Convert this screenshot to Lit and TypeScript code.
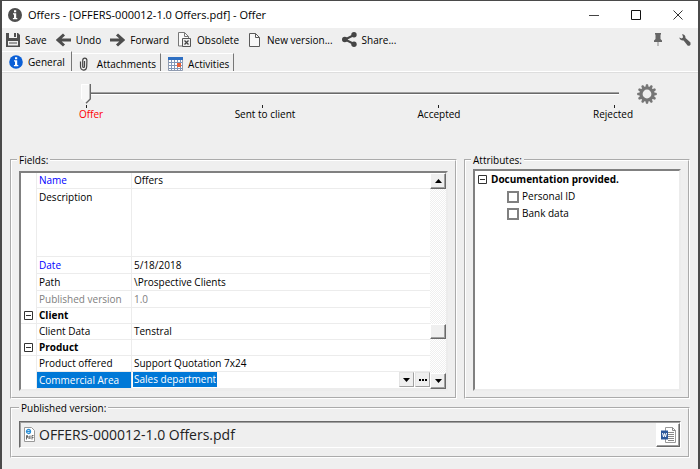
import { LitElement, html, css, svg, nothing } from "lit";
import { customElement, state } from "lit/decorators.js";

const saveIcon = svg`<svg viewBox="0 0 14 14" width="14" height="14"><path fill="#4d4d4d" fill-rule="evenodd" d="M0 0h3v5h8V0h1l2 2v12H0zM2 8v4.500h10V8z"/><path fill="#4d4d4d" d="M8 0h2v4H8zM3 9.500h8v1H3z"/></svg>`;
const undoIcon = svg`<svg viewBox="0 0 15 14" width="15" height="14"><path fill="none" stroke="#4d4d4d" stroke-width="3" d="M2 7h13M8 1.500L2 7l6 5.500"/></svg>`;
const forwardIcon = svg`<svg viewBox="0 0 15 14" width="15" height="14"><path fill="none" stroke="#4d4d4d" stroke-width="3" d="M0 7h13M7 1.500L13 7l-6 5.500"/></svg>`;
const obsoleteIcon = svg`<svg viewBox="0 0 14 15" width="14" height="15"><path fill="#f8f8f8" stroke="#777" d="M.5.5h6l4 4v9.500H.5z"/><path fill="none" stroke="#777" d="M6.500.5v4h4"/><path fill="#eee" stroke="#555" d="M4.500 6.500h8v8h-8z"/><path stroke="#444" stroke-width="1.300" d="M6.500 8.500l4 4m0-4l-4 4"/></svg>`;
const newIcon = svg`<svg viewBox="-1 0 14 14" width="14" height="14"><path fill="#f8f8f8" stroke="#5a5a5a" d="M.5.5h6l4 4v9H.5z"/><path fill="none" stroke="#5a5a5a" d="M6.500.5v4h4"/></svg>`;
const shareIcon = svg`<svg viewBox="0 0 15 15" width="15" height="15"><path fill="none" stroke="#454545" stroke-width="2" d="M12 3L3 7.500l9 4.500"/><circle cx="12" cy="2.800" r="2.700" fill="#454545"/><circle cx="2.800" cy="7.500" r="2.800" fill="#454545"/><circle cx="12" cy="12.200" r="2.700" fill="#454545"/></svg>`;
const pinIcon = svg`<svg viewBox="0 0 8 13" width="8" height="13"><path fill="#666" d="M1 0h6v1.500H6.500V6L8 7.500V9H0V7.500L1.500 6V1.500H1z"/><path fill="#888" d="M3.500 9h1v4h-1z"/></svg>`;
const wrenchIcon = svg`<svg viewBox="0 0 12 12" width="12" height="12"><path fill="#5a5a5a" d="M3 .3C5 .2 6.800 1.700 6.500 4L11.500 8.600v2.200l-1 .9H8.800L4.600 6.500C2.500 6.800.6 5.700.3 3.600L2.600 4.400 4 3.600 3.800 2z"/></svg>`;
const infoGrey = svg`<svg viewBox="0 0 14 14" width="14" height="14"><circle cx="7" cy="7" r="7" fill="#4d4d4d"/><path fill="#fff" d="M6 2.300h2.200v2H6zM5 5.300h3.200v4.700H9.300v1.300H4.900V10H6V6.600H5z"/></svg>`;
const infoBlue = svg`<svg viewBox="0 0 14 14" width="14" height="14"><circle cx="7" cy="7" r="6.800" fill="#0a5fd6"/><path fill="#fff" d="M6 2.300h2.200v2H6zM5 5.300h3.200v4.700H9.300v1.300H4.900V10H6V6.600H5z"/></svg>`;
const clipIcon = svg`<svg viewBox="0 0 13 14" width="13" height="14"><path fill="none" stroke="#444" stroke-width="1.200" d="M5.500 4v5.500c0 1.300-1.800 1.300-1.800 0V3.500C3.700.2 7.900.2 7.900 3.500L7.700 9.500c-.2 4.800-6.200 4.800-6.200 0V4.500"/></svg>`;
const calendarIcon = svg`<svg viewBox="0 0 15 14" width="15" height="14"><path fill="#fff" stroke="#8f9bb0" d="M.5.5h14v13H.5z"/><path fill="#2f6fc2" d="M0 0h15v3H0z"/><path stroke="#8096b8" d="M3.500 3v10M6.500 3v10M9.500 3v10M12.500 3v10M1 5.500h13M1 8.500h13M1 11.500h13"/><path fill="#e8603a" d="M9 6h4v4H9z"/></svg>`;
const gearTeeth = Array.from({ length: 12 }, (_, i) => i * 30);
const gearIcon = svg`<svg viewBox="-10 -10 20 20" width="20" height="20"><circle r="6" fill="none" stroke="#767676" stroke-width="3.200"/>${gearTeeth.map(
  (a) => svg`<path fill="#767676" transform="rotate(${a})" d="M-1.700-6.500L-1-9.800H1L1.700-6.500z"/>`
)}</svg>`;
const pdfIcon = svg`<svg viewBox="0 0 11 15" width="11" height="15"><path fill="#fff" stroke="#999" d="M.5.5h7l3 3v11H.5z"/><circle cx="4.500" cy="4.500" r="2" fill="none" stroke="#2b8fd6" stroke-width="1.300"/><path stroke="#2b8fd6" d="M3 4.500h3.500"/><path fill="none" stroke="#666" d="M2.500 12.500v-4h1v2h-1M6 12V8.500M5 9v3M8 12.500v-4h1.500M8 10.500h1.500"/></svg>`;
const wordIcon = svg`<svg viewBox="0 0 15 16" width="15" height="16"><path fill="#fff" stroke="#999" d="M4.500.5h7l3 3v12h-10z"/><path fill="none" stroke="#888" d="M11.500.5v3h3M7 5.500h6M7 7.500h6M7 9.500h6M7 11.500h6M7 13.500h6"/><path fill="#2b579a" d="M0 3.500h7v9H0z"/><path fill="none" stroke="#fff" d="M1.500 6l1 4 1-3.500 1 3.500 1-4"/></svg>`;
const upArrow = svg`<svg viewBox="0 0 7 4" width="7" height="4"><path d="M0 4L3.500 0 7 4z"/></svg>`;
const downArrow = svg`<svg viewBox="0 0 7 4" width="7" height="4"><path d="M0 0L3.500 4 7 0z"/></svg>`;
const collapseIcon = svg`<svg viewBox="0 0 9 9" width="9" height="9"><path fill="#fff" stroke="#333" d="M.5.5h8v8h-8zM2 4.500h5"/></svg>`;

interface Row {
  label: string;
  value?: string;
  kind?: "required" | "required deep" | "deep" | "tall" | "muted deep" | "group";
}

const rows: Row[] = [
  { label: "Name", value: "Offers", kind: "required" },
  { label: "Description", value: "", kind: "tall" },
  { label: "Date", value: "5/18/2018", kind: "required deep" },
  { label: "Path", value: "\\Prospective Clients", kind: "deep" },
  { label: "Published version", value: "1.0", kind: "muted deep" },
  { label: "Client", kind: "group" },
  { label: "Client Data", value: "Tenstral" },
  { label: "Product", kind: "group" },
  { label: "Product offered", value: "Support Quotation 7x24" },
];

const stages = ["Offer", "Sent to client", "Accepted", "Rejected"];

@customElement("app-root")
export class AppRoot extends LitElement {
  @state() private stage = 0;

  static styles = css`
    :host {
      display: block;
      font: 10px/16px "Open Sans", "Noto Sans", sans-serif;
      color: #000;
    }
    * {
      box-sizing: border-box;
    }
    svg {
      display: block;
      flex: none;
    }
    button {
      font: inherit;
      color: inherit;
      background: none;
      border: 0;
      padding: 0;
      display: flex;
      align-items: center;
      justify-content: center;
    }
    .window {
      min-height: 100vh;
      display: flex;
      flex-direction: column;
      background: #efefef;
      border: 2px solid #4a4a4a;
      border-top-width: 1px;
      border-bottom-width: 1px;
      overflow: hidden;
    }
    .titlebar {
      display: flex;
      align-items: center;
      height: 27px;
      padding: 0 15px 0 6px;
      background: #fff;
    }
    .title {
      flex: 1;
      margin: 0 0 0 6px;
      font-size: 11px;
      font-weight: 400;
    }
    .controls {
      display: flex;
      gap: 32px;
    }
    .toolbar {
      display: flex;
      align-items: center;
      height: 23px;
      padding: 0 7px 0 4px;
      gap: 9px;
    }
    .tool {
      gap: 5px;
    }
    .spacer {
      flex: 1;
    }
    .tools-end {
      display: flex;
      align-items: center;
      gap: 17px;
    }
    .tabs {
      display: flex;
      align-items: flex-end;
      height: 21px;
      border-bottom: 1px solid #fff;
      box-shadow: 0 1px #dedede;
    }
    .tab {
      height: 18px;
      gap: 5px;
      padding: 2px 4px 0 7px;
      border-right: 1px solid #777;
      border-top: 1px solid #fff;
    }
    .tab.active {
      height: 20px;
      padding: 0 6px 0 7px;
    }
    .flow {
      padding-top: 12px;
      height: 80px;
    }
    .slider {
      display: flex;
      padding: 0 41px 0 79px;
      gap: 18px;
      height: 20px;
    }
    .range {
      appearance: none;
      flex: 1;
      min-width: 0;
      margin: 0;
      height: 20px;
      background: linear-gradient(#a0a0a0 0 1px, #696969 1px 2px, #fff 2px 3px) 0 8px / 100% 3px no-repeat;
    }
    .range::-webkit-slider-thumb {
      appearance: none;
      width: 10px;
      height: 20px;
      background: url("data:image/svg+xml,%3Csvg xmlns='http://www.w3.org/2000/svg' width='10' height='20'%3E%3Cpath fill='%23f7f7f7' d='M0 0h10v15l-5 5-5-5z'/%3E%3Cpath fill='none' stroke='%23fff' d='M9 .5H.5V15'/%3E%3Cpath fill='none' stroke='%23696969' stroke-width='1.500' d='M9.300 0v15L5 19.300'/%3E%3C/svg%3E");
    }
    .ticks,
    .stages {
      display: grid;
      grid-template-columns: repeat(4, 1fr);
      justify-items: center;
    }
    .ticks {
      margin: 1px -4px 0;
    }
    .tick {
      width: 1px;
      height: 3px;
      background: #222;
    }
    .stages {
      margin: -2px -2px 0 2px;
    }
    .current {
      color: #f00;
    }
    .panels {
      flex: 1;
      display: grid;
      grid-template-columns: 447fr 226fr;
      gap: 7px;
      padding: 0 8px;
      margin-bottom: 1px;
    }
    .box {
      display: flex;
      flex-direction: column;
      min-width: 0;
      margin: 0;
      padding: 3px 7px 6px;
      border: 2px groove #fff;
    }
    .box.attributes {
      padding-top: 1px;
    }
    .legend {
      margin-left: -2px;
      padding: 0 2px;
      height: 16px;
    }
    .sunken {
      display: flex;
      flex: 1;
      background: #fff;
      border: 2px solid;
      border-color: #808080 #ececec #ececec #808080;
    }
    .tree {
      flex-direction: column;
      padding: 0 3px;
    }
    .grid {
      flex: 1;
      align-self: flex-start;
      border-collapse: separate;
      border-spacing: 0;
      table-layout: fixed;
      width: 100%;
    }
    .grid th,
    .grid td {
      height: 16px;
      padding: 0 0 0 2px;
      line-height: 15px;
      text-align: left;
      vertical-align: top;
      font-weight: 400;
      white-space: nowrap;
      border-bottom: 1px solid #ececec;
    }
    .grid th {
      border-left: 1px solid #ececec;
      border-right: 1px solid #ececec;
    }
    .grid .gutter {
      width: 15px;
      padding: 3px 0 0 3px;
      border-bottom-color: #fff;
    }
    .grid .name {
      width: 96px;
    }
    .grid .deep th,
    .grid .deep td {
      height: 17px;
      line-height: 16px;
    }
    .grid .tall th,
    .grid .tall td {
      height: 68px;
      line-height: 16px;
    }
    .grid .required th {
      color: #00f;
    }
    .grid .muted th,
    .grid .muted td {
      color: #808080;
    }
    .grid .group th {
      font-weight: 700;
    }
    .grid .group .gutter {
      border-bottom-color: #ececec;
    }
    .grid .selected th {
      color: #fff;
      background: #0078d7;
    }
    .grid .selected td {
      padding-left: 1px;
    }
    .editor {
      display: flex;
      gap: 1px;
      height: 16px;
    }
    .value {
      field-sizing: content;
      height: 15px;
      margin: 0 auto 0 0;
      padding: 0 1px;
      border: 0;
      font: inherit;
      line-height: 15px;
      color: #fff;
      background: #0078d7;
    }
    .mini {
      width: 15px;
      height: 15px;
      background: #efefef;
      border: 1px solid;
      border-color: #e4e4e4 #a0a0a0 #a0a0a0 #e4e4e4;
    }
    .scrollbar {
      display: flex;
      flex-direction: column;
      width: 16px;
      background: repeating-conic-gradient(#fff 0 25%, #efefef 0 50%) 0 0 / 2px 2px;
    }
    .raised {
      width: 16px;
      height: 16px;
      background: #efefef;
      border: 1px solid;
      border-color: #fff #696969 #696969 #fff;
      box-shadow: inset -1px -1px #a0a0a0;
    }
    .thumb {
      height: 15px;
      margin: auto 0 34px;
    }
    .heading {
      display: flex;
      align-items: center;
      gap: 4px;
      margin: 0;
      font-size: 10px;
      line-height: 16px;
      font-weight: 700;
    }
    .check {
      display: flex;
      align-items: center;
      gap: 3px;
      height: 17px;
      padding-left: 29px;
    }
    .tick-box {
      appearance: none;
      width: 12px;
      height: 12px;
      margin: 2px 0 0;
      background: #fff;
      border: 2px solid #808080;
    }
    .box.published {
      margin: 0 8px 12px;
      padding: 5px 7px 8px;
    }
    .published .legend {
      margin-left: 0;
    }
    .file {
      display: flex;
      align-items: center;
      gap: 4px;
      height: 27px;
      padding-left: 4px;
      border: 1px solid;
      border-color: #696969 #fff #fff #696969;
      box-shadow: inset 1px 1px #a0a0a0;
      font-size: 14px;
    }
    .filename {
      flex: 1;
      color: #222;
      text-decoration: none;
    }
    .word {
      width: 24px;
      height: 24px;
      background: #fff;
      border: 1px solid;
      border-color: #fff #696969 #696969 #fff;
      box-shadow: inset -1px -1px #a0a0a0;
    }
  `;

  private tool(icon: unknown, label: string) {
    return html`<button class="tool">${icon}<span>${label}</span></button>`;
  }

  private row(r: Row) {
    const group = r.kind === "group";
    return html`<tr class=${r.kind ?? ""}>
      <td class="gutter">${group ? collapseIcon : nothing}</td>
      <th scope="row">${r.label}</th>
      <td>${r.value ?? nothing}</td>
    </tr>`;
  }

  private onStage(e: Event) {
    this.stage = Number((e.target as HTMLInputElement).value);
  }

  render() {
    return html`<main class="window">
      <header class="titlebar">
        ${infoGrey}
        <h1 class="title">Offers - [OFFERS-000012-1.0 Offers.pdf] - Offer</h1>
        <div class="controls">
          <button aria-label="Minimize">
            <svg viewBox="0 0 10 10" width="10" height="10"><path stroke="#444" d="M0 5.500h10" /></svg>
          </button>
          <button aria-label="Maximize">
            <svg viewBox="0 0 10 10" width="10" height="10"><path fill="none" stroke="#111" d="M.5.5h9v9h-9z" /></svg>
          </button>
          <button aria-label="Close">
            <svg viewBox="0 0 10 10" width="10" height="10"><path stroke="#333" d="M.5.5l9 9m0-9l-9 9" /></svg>
          </button>
        </div>
      </header>
      <nav class="toolbar" aria-label="Actions">
        ${this.tool(saveIcon, "Save")} ${this.tool(undoIcon, "Undo")} ${this.tool(forwardIcon, "Forward")}
        ${this.tool(obsoleteIcon, "Obsolete")} ${this.tool(newIcon, "New version...")}
        ${this.tool(shareIcon, "Share...")}
        <span class="spacer"></span>
        <div class="tools-end">
          <button aria-label="Pin">${pinIcon}</button>
          <button aria-label="Settings">${wrenchIcon}</button>
        </div>
      </nav>
      <div class="tabs" role="tablist">
        <button class="tab active" role="tab" aria-selected="true">${infoBlue}<span>General</span></button>
        <button class="tab" role="tab">${clipIcon}<span>Attachments</span></button>
        <button class="tab" role="tab">${calendarIcon}<span>Activities</span></button>
      </div>
      <section class="flow">
        <div class="slider">
          <input class="range" type="range" min="0" max="3" .value=${String(this.stage)} aria-label="Stage" @input=${this.onStage} />
          <button aria-label="Workflow options">${gearIcon}</button>
        </div>
        <div class="ticks">${stages.map(() => html`<span class="tick"></span>`)}</div>
        <div class="stages">
          ${stages.map((s, i) => html`<span class=${i === this.stage ? "current" : ""}>${s}</span>`)}
        </div>
      </section>
      <div class="panels">
        <fieldset class="box">
          <legend class="legend">Fields:</legend>
          <div class="sunken">
            <table class="grid">
              <colgroup>
                <col class="gutter" />
                <col class="name" />
                <col />
              </colgroup>
              <tbody>
                ${rows.map((r) => this.row(r))}
                <tr class="selected deep">
                  <td class="gutter"></td>
                  <th scope="row"><label for="area">Commercial Area</label></th>
                  <td>
                    <div class="editor">
                      <input class="value" id="area" type="text" value="Sales department" />
                      <button class="mini" aria-label="Open list">${downArrow}</button>
                      <button class="mini" aria-label="Browse">
                        <svg viewBox="0 0 8 2" width="8" height="2"><path d="M0 0h2v2H0zM3 0h2v2H3zM6 0h2v2H6z" /></svg>
                      </button>
                    </div>
                  </td>
                </tr>
              </tbody>
            </table>
            <div class="scrollbar">
              <button class="raised" aria-label="Scroll up">${upArrow}</button>
              <div class="raised thumb"></div>
              <button class="raised" aria-label="Scroll down">${downArrow}</button>
            </div>
          </div>
        </fieldset>
        <fieldset class="box attributes">
          <legend class="legend">Attributes:</legend>
          <div class="sunken tree">
            <h2 class="heading">${collapseIcon}Documentation provided.</h2>
            <label class="check"><input class="tick-box" type="checkbox" />Personal ID</label>
            <label class="check"><input class="tick-box" type="checkbox" />Bank data</label>
          </div>
        </fieldset>
      </div>
      <fieldset class="box published">
        <legend class="legend">Published version:</legend>
        <div class="file">
          ${pdfIcon}<a class="filename" href="#">OFFERS-000012-1.0 Offers.pdf</a>
          <button class="word" aria-label="Open in Word">${wordIcon}</button>
        </div>
      </fieldset>
    </main>`;
  }
}
